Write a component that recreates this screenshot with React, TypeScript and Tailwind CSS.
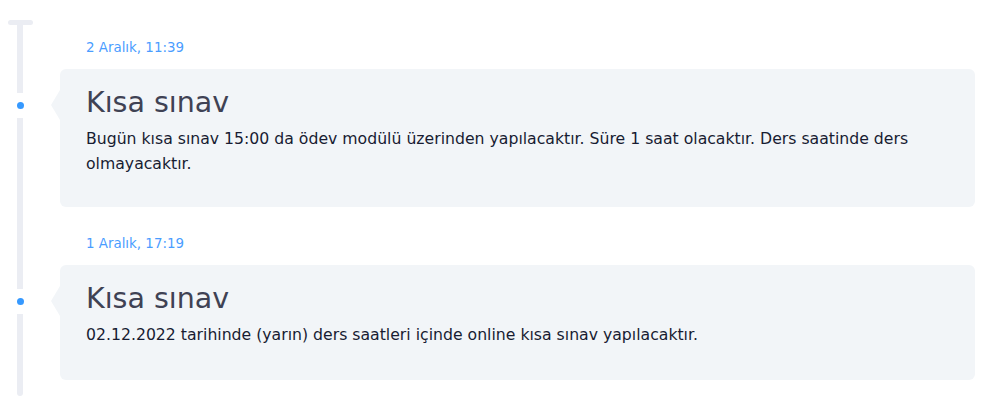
import React from 'react';

interface Post {
  date: string;
  title: string;
  body: string;
}

const posts: Post[] = [
  {
    date: '2 Aralık, 11:39',
    title: 'Kısa sınav',
    body: 'Bugün kısa sınav 15:00 da ödev modülü üzerinden yapılacaktır. Süre 1 saat olacaktır. Ders saatinde ders olmayacaktır.',
  },
  {
    date: '1 Aralık, 17:19',
    title: 'Kısa sınav',
    body: '02.12.2022 tarihinde (yarın) ders saatleri içinde online kısa sınav yapılacaktır.',
  },
];

const TimelineItem: React.FC<{ post: Post; first: boolean; last: boolean }> = ({ post, first, last }) => {
  return (
    <div className="flex">
      {/* rail */}
      <div className="w-[40px] flex flex-col items-center shrink-0">
        {first && <div className="w-[25px] h-[5px] rounded-full bg-[#ebedf3] ml-[1px]" />}
        <div className={`w-[6px] bg-[#ebedf3] ${first ? 'h-[68px]' : 'h-[82px]'}`} />
        <div className="h-[25px] flex items-center justify-center">
          <div className="w-[7px] h-[7px] rounded-full bg-[#3699ff]" />
        </div>
        <div className={`w-[6px] flex-1 bg-[#ebedf3] ${last ? 'rounded-b-full' : ''}`} />
      </div>

      {/* content */}
      <div className={`flex-1 ml-[20px] mr-[23px] ${first ? 'pt-[17px]' : 'pt-[26px] pb-[16px]'}`}>
        <div className="pl-[26px] text-[13.4px] leading-[22px] text-[#4a9dff] mb-[10px]">
          {post.date}
        </div>
        <div className={`relative rounded-[6px] bg-[#f2f5f8] pl-[26px] pr-[26px] pt-[17px] ${first ? 'h-[138px]' : 'h-[115px]'}`}>
          <div className="absolute left-[-9px] top-[21px] w-0 h-0 border-y-[15px] border-y-transparent border-r-[9px] border-r-[#f2f5f8]" />
          <div className="text-[28.5px] leading-[34px] text-[#3f4254]">{post.title}</div>
          <div className="mt-[6px] text-[15.7px] leading-[25px] text-[#181c32]">{post.body}</div>
        </div>
      </div>
    </div>
  );
};

export default function App() {
  return (
    <div className="w-[998px] h-[413px] bg-white pt-[20px]" style={{ fontFamily: '"DejaVu Sans", "Liberation Sans", sans-serif' }}>
      {posts.map((p, i) => (
        <TimelineItem key={i} post={p} first={i === 0} last={i === posts.length - 1} />
      ))}
    </div>
  );
}
